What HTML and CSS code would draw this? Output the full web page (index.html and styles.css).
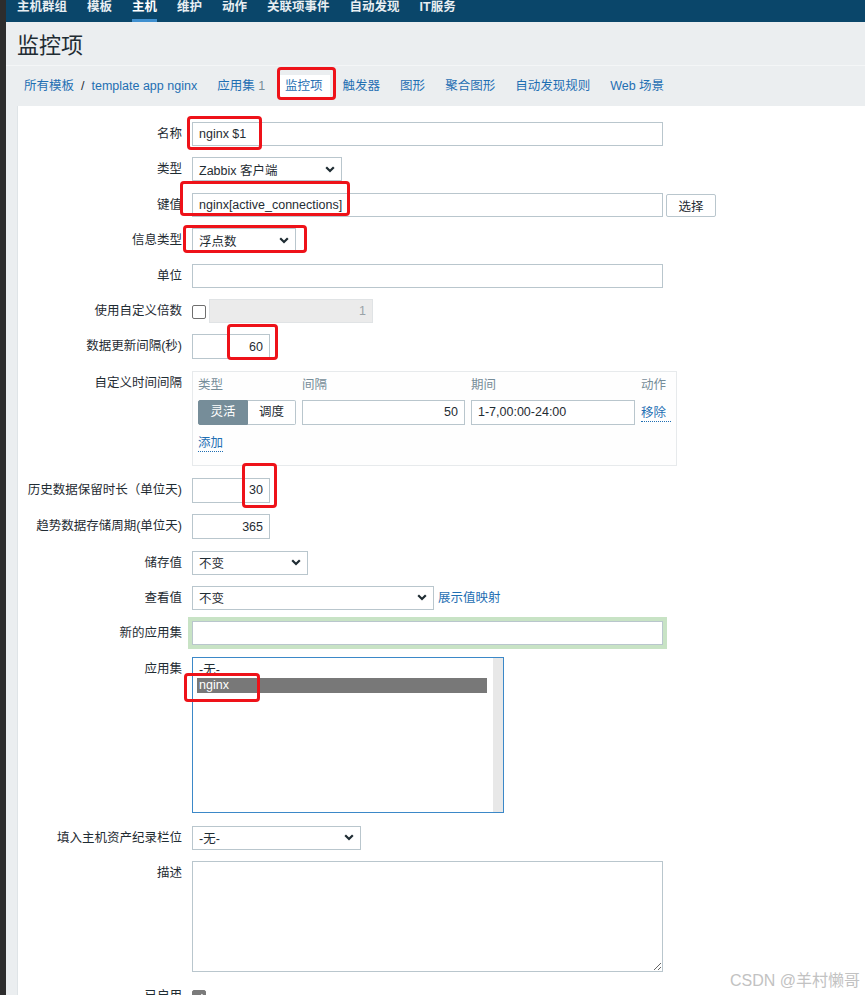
FILE: index.html
```html
<!DOCTYPE html>
<html lang="zh-CN">
<head>
    <meta charset="UTF-8">
    <title>监控项</title>
    <link rel="stylesheet" href="styles.css">
</head>
<body>
<div class="frame-edge"></div>
<div class="app">
    <nav class="top-nav">
        <a href="#">主机群组</a>
        <a href="#">模板</a>
        <a href="#" class="active">主机</a>
        <a href="#">维护</a>
        <a href="#">动作</a>
        <a href="#">关联项事件</a>
        <a href="#">自动发现</a>
        <a href="#">IT服务</a>
    </nav>

    <header class="page-header">
        <h1>监控项</h1>
    </header>

    <div class="tabs">
        <div class="tab breadcrumbs"><a href="#">所有模板</a><span class="sep">/</span><a href="#">template app nginx</a></div>
        <a href="#" class="tab">应用集 <span class="count">1</span></a>
        <a href="#" class="tab selected">监控项</a>
        <a href="#" class="tab">触发器</a>
        <a href="#" class="tab">图形</a>
        <a href="#" class="tab">聚合图形</a>
        <a href="#" class="tab">自动发现规则</a>
        <a href="#" class="tab">Web 场景</a>
    </div>

    <div class="panel">
        <ul class="form-list">
            <li class="form-row">
                <label>名称</label>
                <input type="text" class="input wide" value="nginx $1">
            </li>
            <li class="form-row">
                <label>类型</label>
                <div class="select w-type">Zabbix 客户端<svg class="caret" viewBox="0 0 10 7"><path d="M1.2 1.2 5 5 8.8 1.2"/></svg></div>
            </li>
            <li class="form-row">
                <label>键值</label>
                <input type="text" class="input wide" value="nginx[active_connections]">
                <button class="btn">选择</button>
            </li>
            <li class="form-row">
                <label>信息类型</label>
                <div class="select w-info">浮点数<svg class="caret" viewBox="0 0 10 7"><path d="M1.2 1.2 5 5 8.8 1.2"/></svg></div>
            </li>
            <li class="form-row">
                <label>单位</label>
                <input type="text" class="input wide" value="">
            </li>
            <li class="form-row">
                <label>使用自定义倍数</label>
                <span class="checkbox"></span>
                <input type="text" class="input num disabled w-mult" value="1" disabled>
            </li>
            <li class="form-row">
                <label>数据更新间隔(秒)</label>
                <input type="text" class="input num w-short" value="60">
            </li>
            <li class="form-row row-tall">
                <label>自定义时间间隔</label>
                <div class="intervals">
                    <div class="interval-grid">
                        <span class="col-head">类型</span>
                        <span class="col-head">间隔</span>
                        <span class="col-head">期间</span>
                        <span class="col-head">动作</span>

                        <div class="radio-group">
                            <span class="radio on">灵活</span>
                            <span class="radio">调度</span>
                        </div>
                        <input type="text" class="input num cell" value="50">
                        <input type="text" class="input cell" value="1-7,00:00-24:00">
                        <a href="#" class="link dotted">移除</a>
                    </div>
                    <a href="#" class="link dotted add">添加</a>
                </div>
            </li>
            <li class="form-row">
                <label>历史数据保留时长（单位天)</label>
                <input type="text" class="input num w-short" value="30">
            </li>
            <li class="form-row">
                <label>趋势数据存储周期(单位天)</label>
                <input type="text" class="input num w-short" value="365">
            </li>
            <li class="form-row">
                <label>储存值</label>
                <div class="select w-store">不变<svg class="caret" viewBox="0 0 10 7"><path d="M1.2 1.2 5 5 8.8 1.2"/></svg></div>
            </li>
            <li class="form-row">
                <label>查看值</label>
                <div class="select w-view">不变<svg class="caret" viewBox="0 0 10 7"><path d="M1.2 1.2 5 5 8.8 1.2"/></svg></div>
                <a href="#" class="link map-link">展示值映射</a>
            </li>
            <li class="form-row">
                <label>新的应用集</label>
                <input type="text" class="input wide glow" value="">
            </li>
            <li class="form-row row-list">
                <label>应用集</label>
                <div class="listbox">
                    <div class="options">
                        <div class="option">-无-</div>
                        <div class="option picked">nginx</div>
                    </div>
                    <div class="scroll-track"></div>
                </div>
            </li>
            <li class="form-row">
                <label>填入主机资产纪录栏位</label>
                <div class="select w-inv">-无-<svg class="caret" viewBox="0 0 10 7"><path d="M1.2 1.2 5 5 8.8 1.2"/></svg></div>
            </li>
            <li class="form-row row-text">
                <label>描述</label>
                <textarea class="input area" readonly></textarea>
            </li>
            <li class="form-row">
                <label>已启用</label>
                <span class="checkbox checked"><svg viewBox="0 0 12 12"><path d="M2.5 6.2 5 8.6 9.5 3.4"/></svg></span>
            </li>
        </ul>
    </div>
</div>

<!-- red annotation boxes drawn over the screenshot -->
<span class="callout c-tab"></span>
<span class="callout c-name"></span>
<span class="callout c-key"></span>
<span class="callout c-info"></span>
<span class="callout c-delay"></span>
<span class="callout c-history"></span>
<span class="callout c-app"></span>

<div class="watermark">CSDN @羊村懒哥</div>
</body>
</html>
```

FILE: styles.css
```css
* {
    box-sizing: border-box;
    margin: 0;
    padding: 0;
}

html, body {
    height: 100%;
    overflow: hidden;
}

body {
    display: flex;
    align-items: flex-start;
    font-family: 'Liberation Sans', Arial, 'Noto Sans CJK SC', sans-serif;
    font-size: 12.5px;
    color: #1f2c33;
    background-color: #ebeef0;
    position: relative;
}

a {
    text-decoration: none;
}

.frame-edge {
    width: 6px;
    height: 100%;
    flex-shrink: 0;
    background-color: #2d2d2d;
}

.app {
    flex: 1;
}

/* top menu */
.top-nav {
    height: 22px;
    display: flex;
    gap: 20px;
    padding-left: 11px;
    background-color: #0a466a;
}

.top-nav a {
    display: block;
    height: 22px;
    line-height: 14px;
    font-weight: bold;
    color: #e8eef2;
}

.top-nav a.active {
    color: #fff;
    border-bottom: 3px solid #3f8fcf;
}

/* title */
.page-header {
    height: 44px;
    padding: 5px 0 0 11px;
    border-bottom: 1px solid #f4f6f7;
}

.page-header h1 {
    font-size: 22px;
    font-weight: normal;
    line-height: 38px;
    color: #1f2c33;
}

/* tabs */
.tabs {
    height: 40px;
    display: flex;
    align-items: center;
    gap: 6px;
    padding-left: 11px;
}

.tab {
    display: block;
    padding: 0 7px;
    line-height: 22px;
    color: #1f6fb3;
}

.tab.selected {
    background-color: #fff;
}

.breadcrumbs a {
    color: #1f6fb3;
}

.breadcrumbs .sep {
    margin: 0 7px;
    color: #1f2c33;
}

.tab .count {
    color: #768d99;
}

/* form panel */
.panel {
    margin-left: 11px;
    padding: 16px 0 40px;
    background-color: #fff;
    border-left: 1px solid #dfe4e7;
}

.form-list {
    list-style: none;
}

.form-row {
    display: flex;
    align-items: flex-start;
    margin-bottom: 11.4px;
}

.form-row.row-tall {
    margin-bottom: 12px;
}

.form-row.row-list {
    margin-bottom: 13px;
}

.form-row.row-text {
    margin-bottom: 12px;
}

.form-row label {
    width: 164px;
    margin-right: 10px;
    flex-shrink: 0;
    text-align: right;
    line-height: 24px;
    white-space: nowrap;
}

.input {
    height: 24px;
    padding: 0 6px;
    border: 1px solid #b9c6cd;
    font-family: inherit;
    font-size: 12.5px;
    color: #1f2c33;
    background-color: #fff;
    outline: none;
}

.input.wide {
    width: 471px;
}

.input.num {
    text-align: right;
}

.input.w-short {
    width: 78px;
    height: 25px;
}

.input.w-mult {
    width: 164px;
    margin-left: 3px;
}

.input.disabled {
    background-color: #ebebeb;
    border-color: #e0e3e5;
    color: #9aa3a8;
}

.input.glow {
    box-shadow: 0 0 0 4px #c8e3c5;
}

.btn {
    width: 50px;
    height: 23px;
    margin: 1px 0 0 3px;
    border: 1px solid #b9c6cd;
    border-radius: 2px;
    background-color: #fff;
    font-family: inherit;
    font-size: 12.5px;
    color: #1f2c33;
}

.checkbox {
    width: 14px;
    height: 14px;
    margin-top: 6px;
    flex-shrink: 0;
    border: 1px solid #6f6f6f;
    border-radius: 2px;
    background-color: #fff;
}

.checkbox.checked {
    background-color: #7b7b7b;
    border-color: #7b7b7b;
}

.checkbox svg {
    display: block;
    width: 12px;
    height: 12px;
    fill: none;
    stroke: #fff;
    stroke-width: 1.8;
}

/* fake select boxes */
.select {
    height: 24px;
    display: flex;
    align-items: center;
    justify-content: space-between;
    padding: 0 6px;
    border: 1px solid #b9c6cd;
    background-color: #fff;
}

.caret {
    width: 10px;
    height: 7px;
    fill: none;
    stroke: #1f2c33;
    stroke-width: 2.2;
}

.w-type { width: 150px; }
.w-info { width: 104px; }
.w-store { width: 116px; }
.w-view { width: 242px; }
.w-inv { width: 169px; }

.link {
    color: #1f6fb3;
}

.link.dotted {
    border-bottom: 1px dotted #1f6fb3;
}

.map-link {
    margin-left: 4px;
    line-height: 24px;
}

/* custom intervals */
.intervals {
    width: 485px;
    padding: 5px 5px 13px;
    border: 1px solid #e7eaec;
    background-color: #fefefe;
}

.interval-grid {
    display: grid;
    grid-template-columns: 98px 163px 164px auto;
    grid-template-rows: 17px 25px;
    column-gap: 6px;
    row-gap: 6px;
    align-items: center;
}

.col-head {
    color: #768d99;
    line-height: 17px;
}

.radio-group {
    display: flex;
    height: 25px;
}

.radio {
    height: 25px;
    line-height: 23px;
    text-align: center;
    border: 1px solid #b9c6cd;
    background-color: #fff;
}

.radio:first-child {
    width: 50px;
    border-radius: 2px 0 0 2px;
}

.radio:last-child {
    width: 48px;
    border-left: none;
    border-radius: 0 2px 2px 0;
}

.radio.on {
    background-color: #768d99;
    border-color: #768d99;
    color: #fff;
}

.input.cell {
    width: 100%;
    height: 25px;
}

.intervals .add {
    display: inline-block;
    margin-top: 10px;
    line-height: 16px;
}

/* application list */
.listbox {
    width: 312px;
    height: 156px;
    display: flex;
    border: 1px solid #3b88c8;
    background-color: #fff;
}

.options {
    flex: 1;
    padding: 5px 6px 0 4px;
}

.option {
    height: 15px;
    line-height: 15px;
    padding-left: 2px;
}

.option.picked {
    background-color: #787878;
    color: #fff;
}

.scroll-track {
    width: 10px;
    background-color: #e8e8e8;
}

.input.area {
    width: 471px;
    height: 111px;
    resize: both;
}

/* red annotation boxes */
.callout {
    position: absolute;
    border: 3px solid #ee1219;
    border-radius: 4px;
}

.c-tab { left: 277px; top: 67px; width: 59px; height: 33px; }
.c-name { left: 187px; top: 116px; width: 75px; height: 34px; }
.c-key { left: 180px; top: 181px; width: 170px; height: 35px; }
.c-info { left: 183px; top: 225px; width: 124px; height: 28px; }
.c-delay { left: 227px; top: 324px; width: 51px; height: 36px; }
.c-history { left: 242px; top: 463px; width: 35px; height: 45px; }
.c-app { left: 184px; top: 673px; width: 76px; height: 29px; }

.watermark {
    position: absolute;
    right: 5px;
    top: 967px;
    font-family: 'Liberation Sans', 'Noto Sans CJK SC', sans-serif;
    font-size: 16px;
    color: #c2c2c2;
    white-space: nowrap;
}
```
